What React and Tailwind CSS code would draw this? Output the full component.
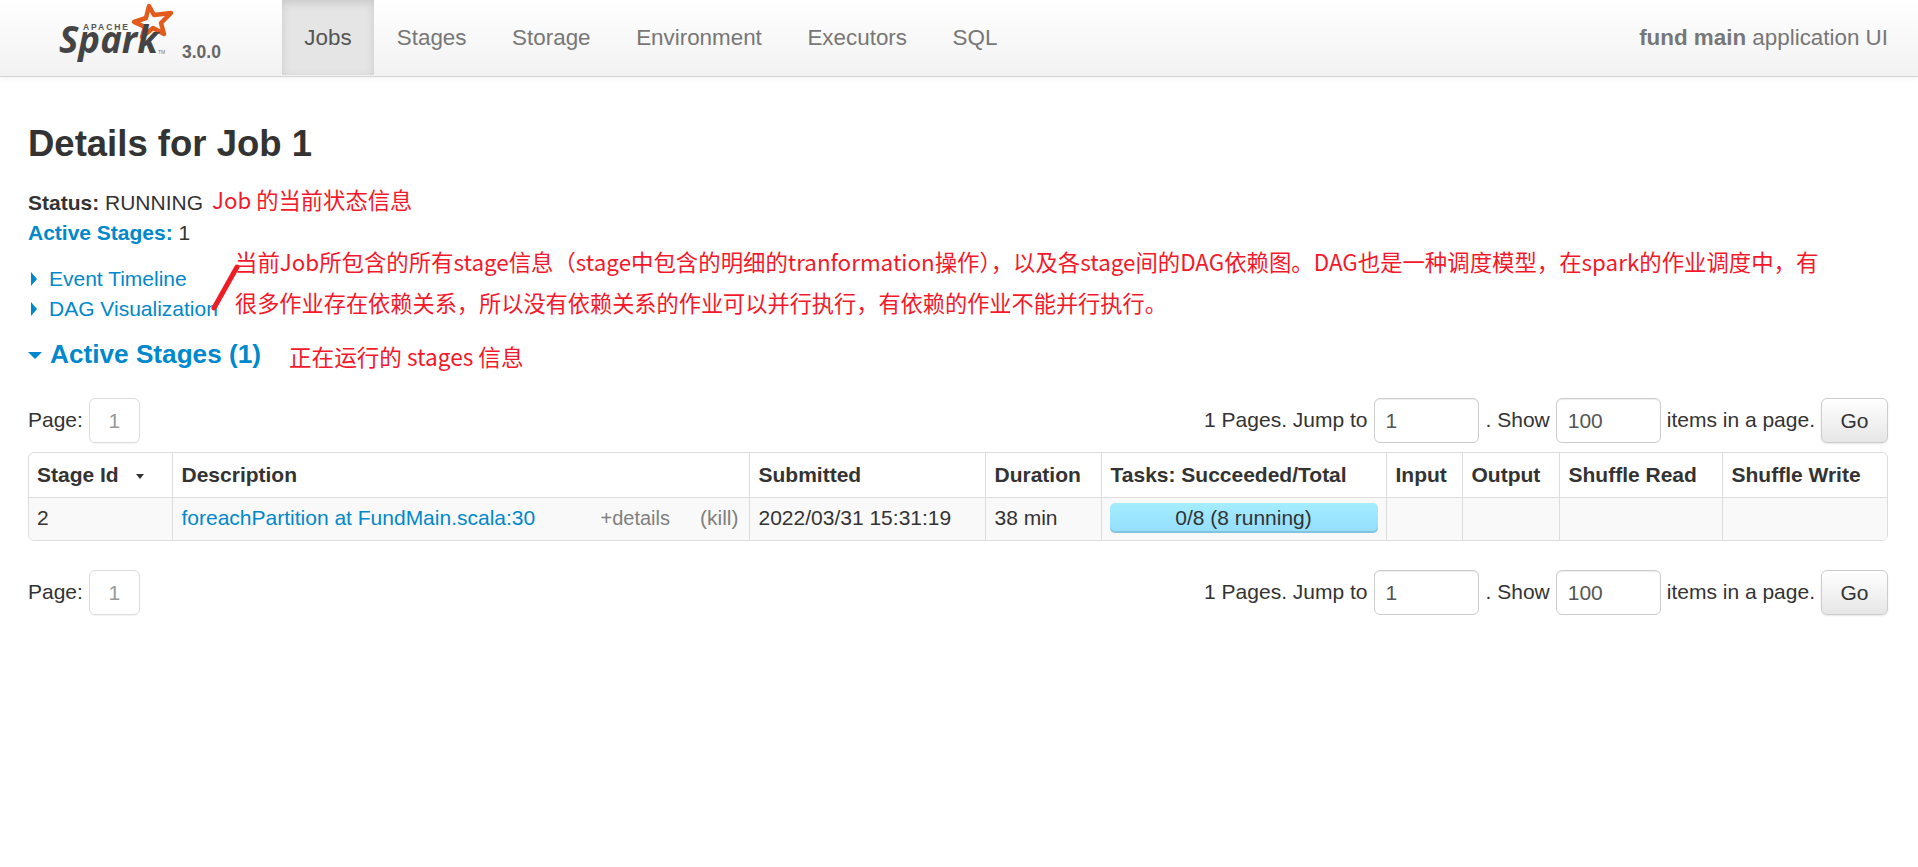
const NAV = ["Stages", "Storage", "Environment", "Executors", "SQL"];

const COLS = [
  { label: "Stage Id", w: "w-[143px]" },
  { label: "Description", w: "w-[577px]" },
  { label: "Submitted", w: "w-[236px]" },
  { label: "Duration", w: "w-[116px]" },
  { label: "Tasks: Succeeded/Total", w: "w-[285px]" },
  { label: "Input", w: "w-[76px]" },
  { label: "Output", w: "w-[97px]" },
  { label: "Shuffle Read", w: "w-[163px]" },
  { label: "Shuffle Write", w: "w-[165px]" },
];

function SparkLogo() {
  return (
    <svg width="130" height="65" viewBox="0 0 130 65" className="shrink-0">
      <path
        d="M99 6L104 15L121 13L111 23L114 34L103 28L92 37L95 27L84 22L96 18Z"
        fill="none"
        stroke="#e25a1c"
        strokeWidth="4.5"
        strokeLinejoin="round"
      />
      <text x="33" y="30" fontSize="8.5" fontWeight="700" fontFamily="Liberation Sans" fill="#555" textLength="45">
        APACHE
      </text>
      <text
        x="9"
        y="53"
        fontSize="38"
        fontFamily="Open Sans"
        fontStyle="italic"
        fontWeight="700"
        fill="#444"
        textLength="99"
        lengthAdjust="spacingAndGlyphs"
      >
        Spark
      </text>
      <text x="108" y="54" fontSize="5" fontFamily="Liberation Sans" fill="#777">
        TM
      </text>
    </svg>
  );
}

function Pager() {
  return (
    <div className="flex items-center justify-between">
      <div className="flex items-center gap-[6px]">
        <span>Page:</span>
        <span className="mt-[2px] flex h-[45px] w-[51px] items-center justify-center rounded-[6px] border border-[#ddd] text-[#999] shadow-[0_1px_1px_rgba(0,0,0,0.05)]">
          1
        </span>
      </div>
      <div className="flex items-center">
        <span>1 Pages. Jump to</span>
        <input
          readOnly
          value="1"
          className="ml-[6px] mt-[2px] h-[45px] w-[105px] rounded-[6px] border border-[#ccc] px-[11px] text-[#555] shadow-[inset_0_1px_1px_rgba(0,0,0,0.075)]"
        />
        <span className="ml-[7px]">. Show</span>
        <input
          readOnly
          value="100"
          className="ml-[6px] mt-[2px] h-[45px] w-[105px] rounded-[6px] border border-[#ccc] px-[11px] text-[#555] shadow-[inset_0_1px_1px_rgba(0,0,0,0.075)]"
        />
        <span className="ml-[6px]">items in a page.</span>
        <button className="ml-[6px] mt-[2px] h-[45px] w-[67px] rounded-[6px] border border-[#ccc] bg-gradient-to-b from-white to-[#e6e6e6] text-[#333] shadow-[0_1px_2px_rgba(0,0,0,0.1)]">
          Go
        </button>
      </div>
    </div>
  );
}

export default function App() {
  return (
    <div className="relative min-h-[867px] bg-white font-['Liberation_Sans',Arial,sans-serif] text-[21px] leading-[30px] text-[#333]">
      <nav className="flex h-[77px] items-stretch border-b border-[#d4d4d4] bg-gradient-to-b from-white to-[#f2f2f2] pb-[1px] text-[22.4px] text-[#777] shadow-[0_1px_6px_rgba(0,0,0,0.06)]">
        <div className="ml-[50px] flex w-[232px] items-start">
          <SparkLogo />
          <span className="ml-[2px] mt-[37px] text-[17.5px] font-bold text-[#666]">3.0.0</span>
        </div>
        <a className="flex w-[92px] items-center justify-center bg-[#e5e5e5] text-[#555] shadow-[inset_0_3px_8px_rgba(0,0,0,0.125)]">
          Jobs
        </a>
        {NAV.map((n) => (
          <a key={n} className="flex items-center px-[22.8px]">
            {n}
          </a>
        ))}
        <div className="ml-auto flex items-center pr-[30px]">
          <span>
            <strong>fund main</strong> application UI
          </span>
        </div>
      </nav>

      <main className="pl-[28px] pr-[30px]">
        <h3 className="mt-[45px] text-[36.5px] font-bold leading-[44px]">Details for Job 1</h3>

        <div className="mt-[22px]">
          <div>
            <strong>Status:</strong> RUNNING
          </div>
          <div>
            <strong className="text-[#0088cc]">Active Stages:</strong> 1
          </div>
        </div>

        <div className="mt-[16px] text-[#0088cc]">
          <div className="flex items-center">
            <span className="ml-[3px] mr-[12px] h-0 w-0 border-y-[7px] border-l-[6px] border-y-transparent border-l-[#0088cc]" />
            Event Timeline
          </div>
          <div className="flex items-center">
            <span className="ml-[3px] mr-[12px] h-0 w-0 border-y-[7px] border-l-[6px] border-y-transparent border-l-[#0088cc]" />
            DAG Visualization
          </div>
        </div>

        <div className="mt-[8px] flex items-center text-[#0088cc]">
          <span className="mr-[8px] mt-[2px] h-0 w-0 border-x-[7px] border-t-[7px] border-x-transparent border-t-[#0088cc]" />
          <h4 className="text-[26.2px] font-bold leading-[44px]">Active Stages (1)</h4>
        </div>

        <div className="mt-[20px]">
          <Pager />
        </div>

        <div className="mt-[9px] overflow-hidden rounded-[6px] border border-[#ddd]">
          <table className="w-full table-fixed border-collapse">
            <colgroup>
              {COLS.map((c) => (
                <col key={c.label} className={c.w} />
              ))}
            </colgroup>
            <thead>
              <tr className="h-[44px]">
                {COLS.map((c, i) => (
                  <th
                    key={c.label}
                    className={`pr-[8px] text-left font-bold ${i > 0 ? "border-l border-[#ddd] pl-[9px]" : "pl-[8px]"}`}
                  >
                    {c.label}
                    {i === 0 && (
                      <span className="ml-[17px] inline-block h-0 w-0 align-middle border-x-[4px] border-t-[5px] border-x-transparent border-t-[#333]" />
                    )}
                  </th>
                ))}
              </tr>
            </thead>
            <tbody>
              <tr className="h-[43px] border-t border-[#ddd] bg-[#f9f9f9]">
                <td className="px-[8px] pb-[1px]">2</td>
                <td className="border-l border-[#ddd] pb-[1px] pl-[9px] pr-[10px]">
                  <div className="flex items-center">
                    <a className="text-[#0088cc]">foreachPartition at FundMain.scala:30</a>
                    <span className="ml-auto text-[20px] text-[#808080]">+details</span>
                    <span className="ml-[30px] text-[#808080]">(kill)</span>
                  </div>
                </td>
                <td className="border-l border-[#ddd] pb-[1px] pl-[9px] pr-[8px]">2022/03/31 15:31:19</td>
                <td className="border-l border-[#ddd] pb-[1px] pl-[9px] pr-[8px]">38 min</td>
                <td className="border-l border-[#ddd] pb-[2px] pl-[8px] pr-[8px]">
                  <div className="flex h-[30px] items-center justify-center rounded-[5px] bg-gradient-to-b from-[#a4edff] to-[#94ddff] shadow-[inset_0_-2px_0_rgba(0,0,0,0.12)]">
                    0/8 (8 running)
                  </div>
                </td>
                <td className="border-l border-[#ddd]" />
                <td className="border-l border-[#ddd]" />
                <td className="border-l border-[#ddd]" />
                <td className="border-l border-[#ddd]" />
              </tr>
            </tbody>
          </table>
        </div>

        <div className="mt-[27px]">
          <Pager />
        </div>
      </main>

      {/* red annotations pasted on top of the screenshot */}
      <div className="font-['Noto_Sans_CJK_SC',sans-serif] text-[22.3px] leading-[30px] text-[#f5182a]">
        <span className="absolute left-[212px] top-[184px]">Job 的当前状态信息</span>
        <span className="absolute left-[235px] top-[246px] whitespace-nowrap text-[22.4px]">
          当前Job所包含的所有stage信息（stage中包含的明细的tranformation操作），以及各stage间的DAG依赖图。DAG也是一种调度模型，在spark的作业调度中，有
        </span>
        <span className="absolute left-[235px] top-[287px] whitespace-nowrap text-[22.2px]">
          很多作业存在依赖关系，所以没有依赖关系的作业可以并行执行，有依赖的作业不能并行执行。
        </span>
        <span className="absolute left-[289px] top-[342px] text-[22.6px]">正在运行的 stages 信息</span>
        <svg className="absolute left-[210px] top-[263px]" width="32" height="50" viewBox="0 0 32 50">
          <line x1="27" y1="4" x2="4" y2="45" stroke="#ee1c25" strokeWidth="5" strokeLinecap="round" />
        </svg>
      </div>
    </div>
  );
}
